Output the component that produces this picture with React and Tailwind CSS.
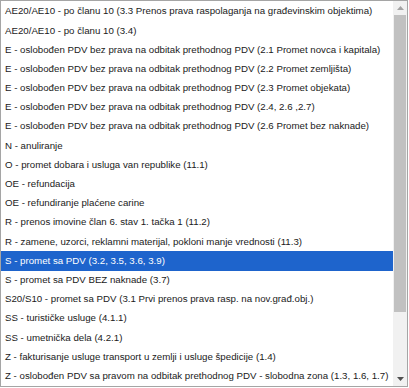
import React from 'react'

const options = [
  'AE20/AE10 - po članu 10 (3.3 Prenos prava raspolaganja na građevinskim objektima)',
  'AE20/AE10 - po članu 10 (3.4)',
  'E - oslobođen PDV bez prava na odbitak prethodnog PDV (2.1 Promet novca i kapitala)',
  'E - oslobođen PDV bez prava na odbitak prethodnog PDV (2.2 Promet zemljišta)',
  'E - oslobođen PDV bez prava na odbitak prethodnog PDV (2.3 Promet objekata)',
  'E - oslobođen PDV bez prava na odbitak prethodnog PDV (2.4, 2.6 ,2.7)',
  'E - oslobođen PDV bez prava na odbitak prethodnog PDV (2.6 Promet bez naknade)',
  'N - anuliranje',
  'O - promet dobara i usluga van republike (11.1)',
  'OE - refundacija',
  'OE - refundiranje plaćene carine',
  'R - prenos imovine član 6. stav 1. tačka 1 (11.2)',
  'R - zamene, uzorci, reklamni materijal, pokloni manje vrednosti (11.3)',
  'S - promet sa PDV (3.2, 3.5, 3.6, 3.9)',
  'S - promet sa PDV BEZ naknade (3.7)',
  'S20/S10 - promet sa PDV (3.1 Prvi prenos prava rasp. na nov.građ.obj.)',
  'SS - turističke usluge (4.1.1)',
  'SS - umetnička dela (4.2.1)',
  'Z - fakturisanje usluge transport u zemlji i usluge špedicije (1.4)',
  'Z - oslobođen PDV sa pravom na odbitak prethodnog PDV - slobodna zona (1.3, 1.6, 1.7)',
]

const selected = 13

export default function App() {
  return (
    <div className="w-[409px] h-[388px] bg-white" style={{ fontFamily: '"Liberation Sans", Arial, sans-serif' }}>
      <div className="w-[408px] h-[387px] border border-[#a5a5a5] flex overflow-hidden bg-white">
        <ul className="flex-1 min-w-0 pt-px">
          {options.map((opt, i) => (
            <li
              key={i}
              className={`h-[19.2px] flex items-center pl-1 whitespace-nowrap overflow-hidden text-[9.7px] ${
                i === selected ? 'bg-[#1e64cc] text-white' : 'text-[#1a1a1a]'
              }`}
            >
              {opt}
            </li>
          ))}
        </ul>
        <div className="w-[14px] bg-[#f1f1f1] flex flex-col">
          <div className="h-[14px] flex items-center justify-center">
            <svg width="7" height="4" viewBox="0 0 7 4">
              <path d="M0 4 L3.5 0 L7 4 Z" fill="#a3a3a3" />
            </svg>
          </div>
          <div className="h-[297px] mx-[1px] bg-[#c1c1c1]" />
          <div className="flex-1" />
          <div className="h-[14px] flex items-center justify-center">
            <svg width="7" height="4" viewBox="0 0 7 4">
              <path d="M0 0 L7 0 L3.5 4 Z" fill="#505050" />
            </svg>
          </div>
        </div>
      </div>
    </div>
  )
}
